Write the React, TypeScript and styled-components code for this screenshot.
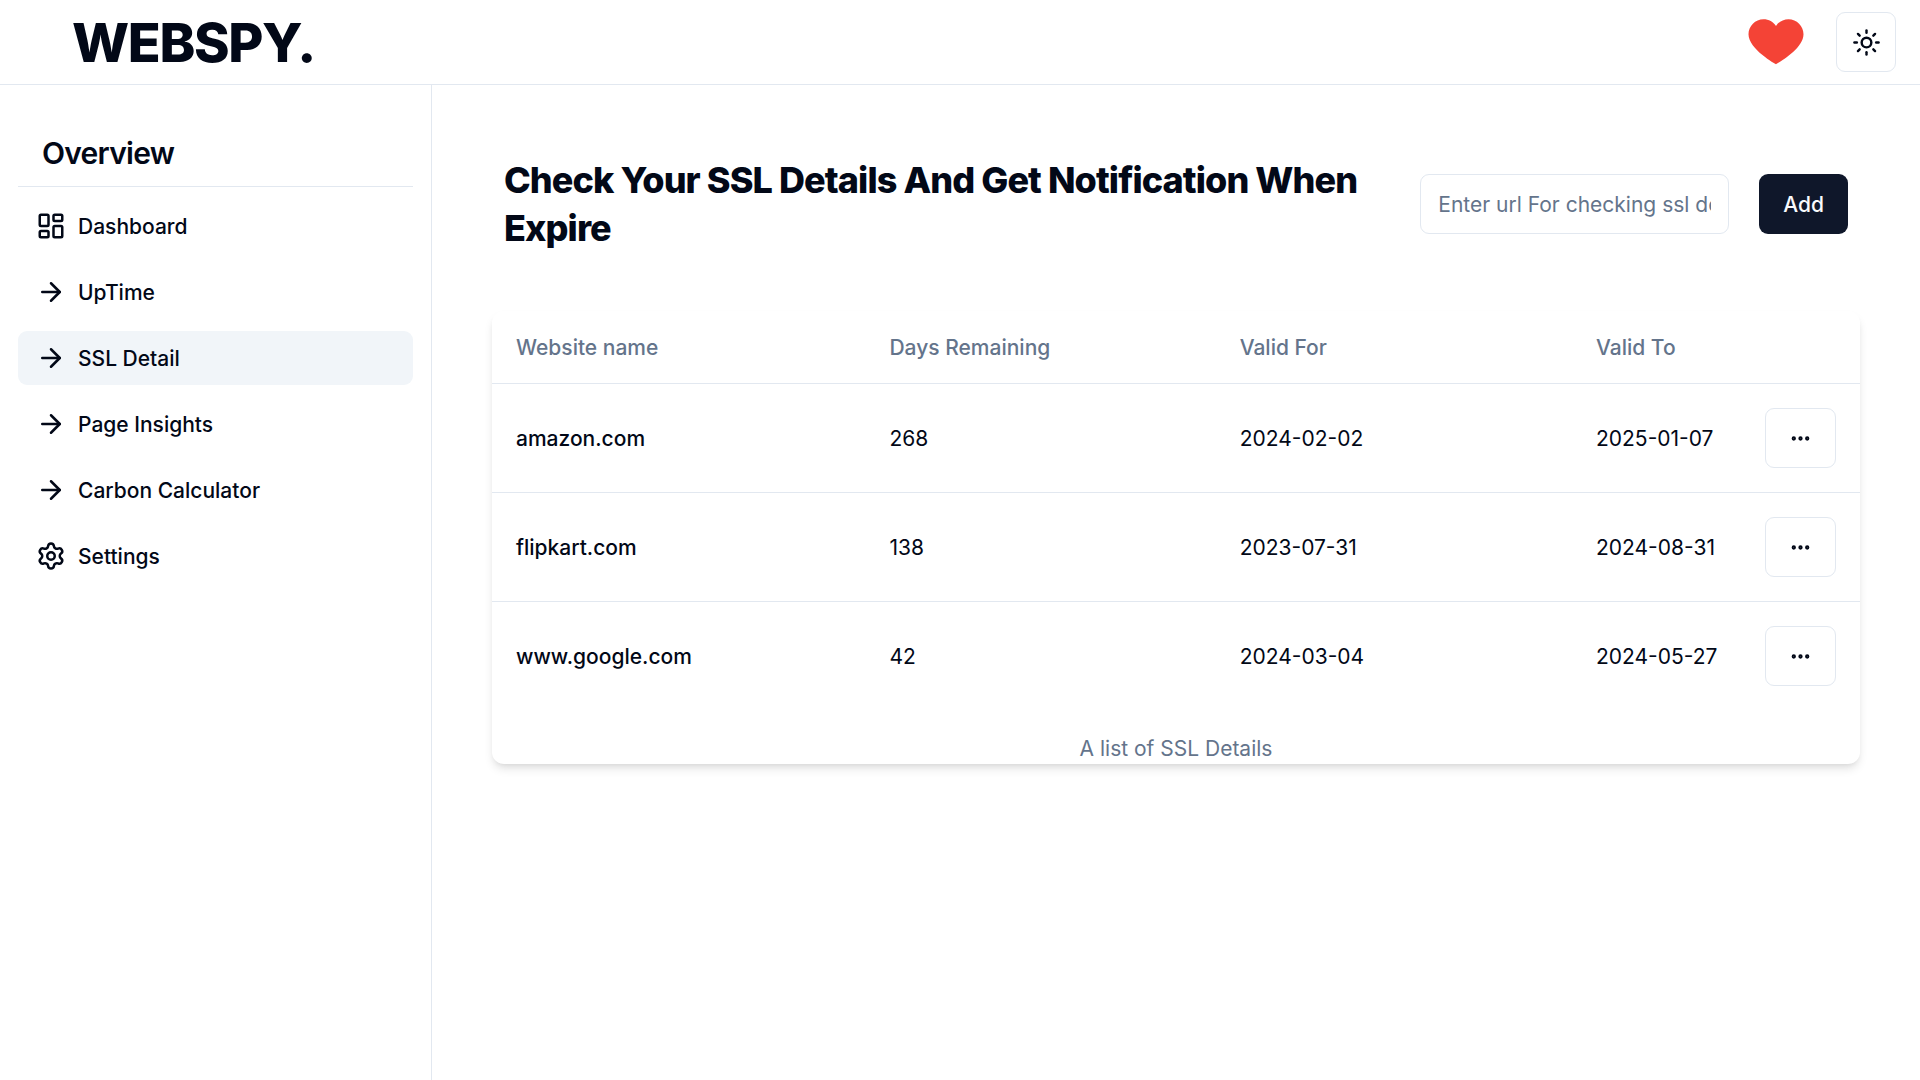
import React from "react";
import styled, { createGlobalStyle } from "styled-components";
import { ArrowRight, Ellipsis, LayoutDashboard, Settings, Sun } from "lucide-react";

const color = {
  background: "#ffffff",
  foreground: "#020817",
  muted: "#64748b",
  border: "#e2e8f0",
  accent: "#f1f5f9",
  primary: "#0f172a",
  primaryText: "#f8fafc",
  heart: "#f44336",
};

const GlobalStyle = createGlobalStyle`
  *, *::before, *::after { box-sizing: border-box; }
  body {
    margin: 0;
    background: ${color.background};
    color: ${color.foreground};
    font: 400 21px/31px Inter, "Liberation Sans", sans-serif;
  }
  h1, h2, p, ul { margin: 0; padding: 0; }
  button, input { font: inherit; color: inherit; }
  a { color: inherit; text-decoration: none; }
`;

const Page = styled.div`
  display: flex;
  flex-direction: column;
  min-height: 100vh;
`;

const Header = styled.header`
  display: flex;
  align-items: center;
  justify-content: space-between;
  height: 85px;
  padding: 0 24px 0 72px;
  border-bottom: 1px solid ${color.border};
`;

const Logo = styled.a`
  padding-top: 2px;
  font-size: 54px;
  line-height: 60px;
  font-weight: 800;
  letter-spacing: -0.025em;
`;

const HeaderActions = styled.div`
  display: flex;
  align-items: center;
  gap: 30px;
`;

const HeartLink = styled.a`
  display: flex;
  padding-bottom: 8px;
`;

const OutlineButton = styled.button<{ $square?: boolean }>`
  display: inline-flex;
  align-items: center;
  justify-content: center;
  height: 60px;
  width: ${(p) => (p.$square ? "60px" : "71px")};
  padding: 0;
  border: 1px solid ${color.border};
  border-radius: 9px;
  background: ${color.background};
  cursor: pointer;
`;

const Body = styled.div`
  display: flex;
  flex: 1;
`;

const Sidebar = styled.aside`
  flex: none;
  width: 432px;
  padding: 47px 18px;
  border-right: 1px solid ${color.border};
`;

const SidebarTitle = styled.h2`
  padding: 0 24px 12px;
  border-bottom: 1px solid ${color.border};
  font-size: 30px;
  line-height: 42px;
  font-weight: 600;
  letter-spacing: -0.025em;
`;

const NavList = styled.ul`
  display: flex;
  flex-direction: column;
  gap: 12px;
  padding-top: 12px;
  list-style: none;
`;

const NavLink = styled.a<{ $active?: boolean }>`
  display: flex;
  align-items: flex-start;
  gap: 12px;
  padding: 12px 18px 11px;
  border-radius: 9px;
  font-weight: 500;
  background: ${(p) => (p.$active ? color.accent : "transparent")};
`;

const Main = styled.main`
  flex: 1;
  min-width: 0;
  padding: 71px 60px;
`;

const Toolbar = styled.form`
  display: flex;
  align-items: center;
  gap: 30px;
  padding: 0 12px;
`;

const Title = styled.h1`
  flex: 1;
  font-size: 36px;
  line-height: 48px;
  font-weight: 800;
  letter-spacing: -0.025em;
`;

const UrlInput = styled.input`
  width: 309px;
  height: 60px;
  padding: 0 17px;
  border: 1px solid ${color.border};
  border-radius: 9px;
  background: ${color.background};
  &::placeholder { color: ${color.muted}; opacity: 1; }
`;

const AddButton = styled.button`
  height: 60px;
  padding: 0 24px;
  border: 0;
  border-radius: 9px;
  background: ${color.primary};
  color: ${color.primaryText};
  font-weight: 500;
  cursor: pointer;
`;

const Card = styled.section`
  margin-top: 59px;
  border-radius: 12px;
  box-shadow: 0 6px 10px -1px rgba(0, 0, 0, 0.1), 0 3px 6px -3px rgba(0, 0, 0, 0.1);
`;

const Table = styled.table`
  width: 100%;
  table-layout: fixed;
  border-collapse: separate;
  border-spacing: 0;
  caption-side: bottom;
`;

const Caption = styled.caption`
  padding-top: 24px;
  line-height: 30px;
  color: ${color.muted};
`;

const Column = styled.col<{ $width?: string }>`
  width: ${(p) => p.$width ?? "auto"};
`;

const HeadCell = styled.th`
  height: 73px;
  padding: 0 24px;
  border-bottom: 1px solid ${color.border};
  color: ${color.muted};
  font-weight: 500;
  text-align: left;
`;

const Cell = styled.td<{ $strong?: boolean }>`
  height: 109px;
  padding: 0 24px;
  border-bottom: 1px solid ${color.border};
  font-weight: ${(p) => (p.$strong ? 500 : 400)};
  white-space: nowrap;

  tr:last-child > & {
    height: 108px;
    border-bottom: 0;
  }
`;

const ActionBox = styled.div`
  display: flex;
`;

const navItems = [
  { label: "Dashboard", icon: LayoutDashboard },
  { label: "UpTime", icon: ArrowRight },
  { label: "SSL Detail", icon: ArrowRight, active: true },
  { label: "Page Insights", icon: ArrowRight },
  { label: "Carbon Calculator", icon: ArrowRight },
  { label: "Settings", icon: Settings },
];

const sites = [
  { name: "amazon.com", days: 268, from: "2024-02-02", to: "2025-01-07" },
  { name: "flipkart.com", days: 138, from: "2023-07-31", to: "2024-08-31" },
  { name: "www.google.com", days: 42, from: "2024-03-04", to: "2024-05-27" },
];

function Heart() {
  return (
    <svg width="60" height="60" viewBox="0 0 48 48" aria-hidden="true">
      <path
        fill={color.heart}
        d="M34 9c-4.2 0-7.9 2.1-10 5.4C21.9 11.1 18.2 9 14 9 7.4 9 2 14.4 2 21c0 11.9 22 24 22 24s22-12 22-24c0-6.6-5.4-12-12-12z"
      />
    </svg>
  );
}

export default function App() {
  return (
    <Page>
      <GlobalStyle />
      <Header>
        <Logo href="#">WEBSPY.</Logo>
        <HeaderActions>
          <HeartLink href="#sponsor" aria-label="Sponsor">
            <Heart />
          </HeartLink>
          <OutlineButton $square type="button" aria-label="Toggle theme">
            <Sun size={29} />
          </OutlineButton>
        </HeaderActions>
      </Header>
      <Body>
        <Sidebar>
          <SidebarTitle>Overview</SidebarTitle>
          <nav aria-label="Overview">
            <NavList>
              {navItems.map(({ label, icon: Icon, active }) => (
                <li key={label}>
                  <NavLink href="#" $active={active} aria-current={active ? "page" : undefined}>
                    <Icon size={30} />
                    {label}
                  </NavLink>
                </li>
              ))}
            </NavList>
          </nav>
        </Sidebar>
        <Main>
          <Toolbar onSubmit={(e) => e.preventDefault()}>
            <Title>Check Your SSL Details And Get Notification When Expire</Title>
            <UrlInput
              type="text"
              aria-label="Website url"
              placeholder="Enter url For checking ssl details"
            />
            <AddButton type="submit">Add</AddButton>
          </Toolbar>
          <Card>
            <Table>
              <Caption>A list of SSL Details</Caption>
              <colgroup>
                <Column $width="27.3%" />
                <Column $width="25.6%" />
                <Column />
                <Column $width="169px" />
                <Column $width="119px" />
              </colgroup>
              <thead>
                <tr>
                  <HeadCell scope="col">Website name</HeadCell>
                  <HeadCell scope="col">Days Remaining</HeadCell>
                  <HeadCell scope="col">Valid For</HeadCell>
                  <HeadCell scope="col">Valid To</HeadCell>
                  <HeadCell scope="col" aria-label="Actions" />
                </tr>
              </thead>
              <tbody>
                {sites.map((site) => (
                  <tr key={site.name}>
                    <Cell $strong>{site.name}</Cell>
                    <Cell>{site.days}</Cell>
                    <Cell>{site.from}</Cell>
                    <Cell>{site.to}</Cell>
                    <Cell>
                      <ActionBox>
                        <OutlineButton type="button" aria-label={`Actions for ${site.name}`}>
                          <Ellipsis size={23} strokeWidth={2.5} />
                        </OutlineButton>
                      </ActionBox>
                    </Cell>
                  </tr>
                ))}
              </tbody>
            </Table>
          </Card>
        </Main>
      </Body>
    </Page>
  );
}
